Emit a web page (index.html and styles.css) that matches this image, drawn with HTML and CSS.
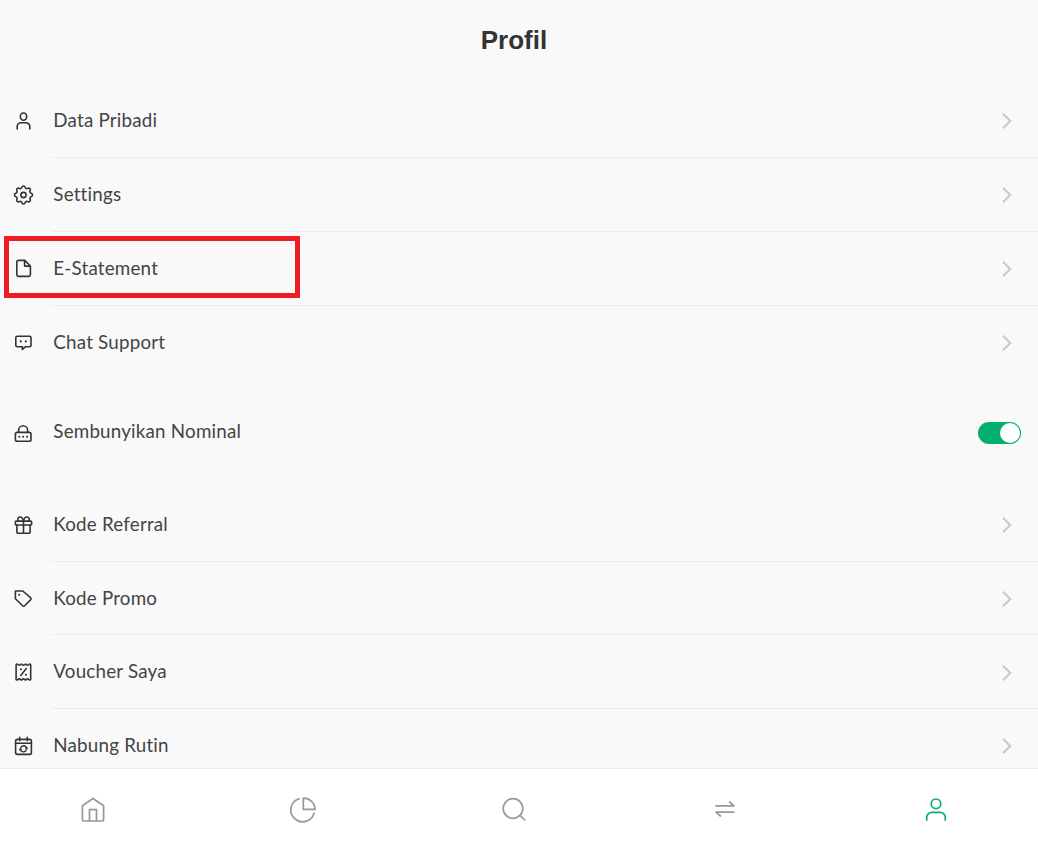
FILE: index.html
```html
<!DOCTYPE html>
<html lang="id">
<head>
    <meta charset="UTF-8">
    <meta name="viewport" content="width=device-width, initial-scale=1.0">
    <title>Profil</title>
    <link rel="stylesheet" href="styles.css">
</head>
<body>
    <div class="page">
        <main class="content">
            <h1 class="title">Profil</h1>

            <ul class="menu">
                <li class="menu-item">
                    <svg class="icon" viewBox="0 0 24 24"><ellipse cx="12.5" cy="7.6" rx="3.2" ry="3.6"/><path d="M6.2 20v-2.4a3.8 3.8 0 0 1 3.8-3.8h5a3.8 3.8 0 0 1 3.8 3.8v2.4"/></svg>
                    <div class="menu-body"><span class="label">Data Pribadi</span><svg class="chevron" viewBox="0 0 12 18"><path d="M2 1.8L9.2 9L2 16.2"/></svg></div>
                </li>
                <li class="menu-item">
                    <svg class="icon" viewBox="0 0 24 24"><path d="M10.825 4.317c.426-1.756 2.924-1.756 3.35 0a1.724 1.724 0 0 0 2.573 1.066c1.543-.94 3.31.826 2.37 2.37a1.724 1.724 0 0 0 1.065 2.572c1.756.426 1.756 2.924 0 3.35a1.724 1.724 0 0 0-1.066 2.573c.94 1.543-.826 3.31-2.37 2.37a1.724 1.724 0 0 0-2.572 1.065c-.426 1.756-2.924 1.756-3.35 0a1.724 1.724 0 0 0-2.573-1.066c-1.543.94-3.31-.826-2.37-2.37a1.724 1.724 0 0 0-1.065-2.572c-1.756-.426-1.756-2.924 0-3.35a1.724 1.724 0 0 0 1.066-2.573c-.94-1.543.826-3.31 2.37-2.37c1 .608 2.296.07 2.572-1.065z"/><circle cx="12.5" cy="12" r="2.6"/></svg>
                    <div class="menu-body"><span class="label">Settings</span><svg class="chevron" viewBox="0 0 12 18"><path d="M2 1.8L9.2 9L2 16.2"/></svg></div>
                </li>
                <li class="menu-item highlighted">
                    <svg class="icon" viewBox="0 0 24 24"><path d="M7.6 3.4h6.2l5.6 5.6v8.6a1.8 1.8 0 0 1-1.8 1.8h-10a1.8 1.8 0 0 1-1.8-1.8V5.2a1.8 1.8 0 0 1 1.8-1.8zM13.6 3.4v5.7h5.8"/></svg>
                    <div class="menu-body"><span class="label">E-Statement</span><svg class="chevron" viewBox="0 0 12 18"><path d="M2 1.8L9.2 9L2 16.2"/></svg></div>
                </li>
                <li class="menu-item">
                    <svg class="icon" viewBox="0 0 24 24"><path d="M6.3 5.2h12.2a1.5 1.5 0 0 1 1.5 1.5v7.5a1.5 1.5 0 0 1-1.5 1.5H14.6l-3.2 2.8v-2.8H6.3a1.5 1.5 0 0 1-1.5-1.5V6.7a1.5 1.5 0 0 1 1.5-1.5z"/><path class="dots" d="M9.8 10.4h.01M14.8 10.4h.01"/></svg>
                    <div class="menu-body"><span class="label">Chat Support</span><svg class="chevron" viewBox="0 0 12 18"><path d="M2 1.8L9.2 9L2 16.2"/></svg></div>
                </li>
            </ul>

            <ul class="menu toggle-menu">
                <li class="menu-item">
                    <svg class="icon" viewBox="0 0 24 24"><rect x="4.4" y="11.4" width="15.6" height="8.8" rx="1.8"/><path d="M7.6 11.2V9.2a4.5 4.5 0 0 1 9 0v2"/><path class="dots" d="M8.3 15.8h.01M12.2 15.8h.01M16.1 15.8h.01"/></svg>
                    <div class="menu-body"><span class="label">Sembunyikan Nominal</span><button class="toggle" type="button" role="switch" aria-checked="true" aria-label="Sembunyikan Nominal"><span class="knob"></span></button></div>
                </li>
            </ul>

            <ul class="menu">
                <li class="menu-item">
                    <svg class="icon" viewBox="0 0 24 24"><rect x="4.4" y="8.1" width="16.2" height="3.9" rx=".8"/><path d="M5.9 12v7.4a.8.8 0 0 0 .8.8h11.6a.8.8 0 0 0 .8-.8V12M12.5 8.1v12.1M12.5 8C12 5.2 10.2 3.8 8.6 4C6.6 4.3 6.4 7 7.4 8M12.5 8c.5-2.8 2.3-4.2 3.9-4c2 .3 2.2 3 1.2 4"/></svg>
                    <div class="menu-body"><span class="label">Kode Referral</span><svg class="chevron" viewBox="0 0 12 18"><path d="M2 1.8L9.2 9L2 16.2"/></svg></div>
                </li>
                <li class="menu-item">
                    <svg class="icon" viewBox="0 0 24 24"><path d="M4.4 4h7.4l7.9 6.8a1.3 1.3 0 0 1 .1 1.8l-6.2 6.2a1.4 1.4 0 0 1-2 0L4.4 11.8z"/><path class="dots" d="M8.2 7.7h.01"/></svg>
                    <div class="menu-body"><span class="label">Kode Promo</span><svg class="chevron" viewBox="0 0 12 18"><path d="M2 1.8L9.2 9L2 16.2"/></svg></div>
                </li>
                <li class="menu-item">
                    <svg class="icon" viewBox="0 0 24 24"><path d="M5.1 4.9q0-.8.9-.8q.5 0 .9.4q1.4 1.3 2.8 0q.6-.6 1.2 0q1.5 1.3 3 0q.6-.6 1.2 0q1.4 1.3 2.8 0q.4-.4.9-.4q.9 0 .9.8v14.3q0 .8-.9.8q-.5 0-.9-.4q-1.4-1.3-2.8 0q-.6.6-1.2 0q-1.5-1.3-3 0q-.6.6-1.2 0q-1.4-1.3-2.8 0q-.4.4-.9.4q-.9 0-.9-.8z"/><path d="M15.2 8.6L9.8 15.4"/><path class="dots" d="M9.9 9.2h.01M14.9 14.8h.01"/></svg>
                    <div class="menu-body"><span class="label">Voucher Saya</span><svg class="chevron" viewBox="0 0 12 18"><path d="M2 1.8L9.2 9L2 16.2"/></svg></div>
                </li>
                <li class="menu-item">
                    <svg class="icon" viewBox="0 0 24 24"><rect x="4.6" y="5.4" width="15.8" height="15" rx="1.8"/><path d="M4.6 9.2h15.8M8.7 3.2v3.6M16.3 3.2v3.6"/><path class="thin" d="M9.7 13.8a3 3 0 0 1 5.8.4M15.3 15.8a3 3 0 0 1-5.8-.4"/><path class="solid" d="M17.3 13.2l-1.4 2.8l-2.2-2.1zM7.7 16.4l1.4-2.8l2.2 2.1z"/></svg>
                    <div class="menu-body"><span class="label">Nabung Rutin</span><svg class="chevron" viewBox="0 0 12 18"><path d="M2 1.8L9.2 9L2 16.2"/></svg></div>
                </li>
            </ul>
        </main>

        <nav class="bottom-nav">
            <a class="nav-link"><svg viewBox="0 0 28 28"><path d="M14 2.5l10.6 7.3v13.6a1.6 1.6 0 0 1-1.6 1.6H5a1.6 1.6 0 0 1-1.6-1.6V9.8z"/><path d="M10.5 25V13.6h7V25"/></svg></a>
            <a class="nav-link"><svg viewBox="0 0 28 28"><path d="M10.2 2.7A11.8 11.8 0 1 0 25 17.2"/><path d="M14.3 2.2a11.4 11.4 0 0 1 11.8 11.2H14.3z"/></svg></a>
            <a class="nav-link"><svg viewBox="0 0 28 28"><circle cx="13" cy="12.5" r="9.8"/><path d="M19.8 19.3l5 4.7"/></svg></a>
            <a class="nav-link"><svg viewBox="0 0 28 28"><path d="M5 9.9h18l-4.4-3.9M23 16.1H5l4.4 3.9"/></svg></a>
            <a class="nav-link active"><svg viewBox="0 0 28 28"><circle cx="14" cy="7.8" r="4.8"/><path d="M4.7 24v-2.4a5.2 5.2 0 0 1 5.2-5.2h8.2a5.2 5.2 0 0 1 5.2 5.2V24"/></svg></a>
        </nav>
    </div>
</body>
</html>
```
FILE: styles.css
```css
* {
    box-sizing: border-box;
}
body {
    margin: 0;
    font-family: Lato, sans-serif;
    background-color: #f9f9f9;
    color: #333;
}
.page {
    height: 843px;
    display: flex;
    flex-direction: column;
}
.content {
    flex: 1;
    min-height: 0;
    overflow: hidden;
}
.title {
    height: 84.3px;
    margin: 0;
    padding: 22px 10px 0 0;
    font-family: "Liberation Sans", Arial, sans-serif;
    font-size: 26px;
    line-height: 36px;
    font-weight: bold;
    text-align: center;
}
.menu {
    list-style: none;
    margin: 0 0 16.4px;
    padding: 0;
}
.toggle-menu {
    margin-bottom: 18.2px;
}
.menu-item {
    position: relative;
    height: 73.8px;
    display: flex;
    align-items: center;
}
.icon {
    width: 24px;
    height: 24px;
    margin: 0 17px 0 11px;
    flex-shrink: 0;
}
.icon path,
.icon rect,
.icon circle,
.icon ellipse {
    fill: none;
    stroke: #333;
    stroke-width: 1.6;
    stroke-linecap: round;
    stroke-linejoin: round;
}
.icon .dots {
    stroke-width: 2.1;
}
.icon .thin {
    stroke-width: 1.3;
}
.icon .solid {
    fill: #333;
    stroke: none;
}
.menu-body {
    flex: 1;
    height: 100%;
    display: flex;
    align-items: center;
    justify-content: space-between;
    padding: 1px 25px 0 1.3px;
    border-bottom: 1px solid #ececec;
}
.menu-item:last-child .menu-body {
    border-bottom-color: transparent;
}
.label {
    padding-bottom: 2px;
    font-size: 18.8px;
    line-height: 24px;
    letter-spacing: 0.2px;
    color: #444;
}
.toggle-menu .label {
    padding-bottom: 3px;
}
.chevron {
    width: 12px;
    height: 18px;
    margin-top: 0.5px;
}
.chevron path {
    fill: none;
    stroke: #c8c8cb;
    stroke-width: 2;
}
.highlighted::after {
    content: "";
    box-sizing: border-box;
    position: absolute;
    top: 4px;
    left: 4px;
    width: 296px;
    height: 62px;
    border: 5px solid #ee1c25;
}
.toggle {
    width: 43px;
    height: 22px;
    margin-right: -8px;
    padding: 0 1px;
    display: flex;
    align-items: center;
    justify-content: flex-end;
    border: none;
    border-radius: 11px;
    background-color: #04ae6e;
}
.knob {
    width: 20px;
    height: 20px;
    border-radius: 50%;
    background-color: #fff;
}
.bottom-nav {
    height: 75px;
    padding: 7px 88.5px 0 78.5px;
    display: flex;
    align-items: center;
    justify-content: space-between;
    background-color: #fff;
    border-top: 1px solid #ececec;
}
.nav-link {
    width: 28px;
    height: 28px;
}
.nav-link svg {
    display: block;
    width: 28px;
    height: 28px;
    fill: none;
    stroke: #999;
    stroke-width: 1.7;
    stroke-linecap: round;
    stroke-linejoin: round;
}
.nav-link.active svg {
    stroke: #04ae6e;
}
```
